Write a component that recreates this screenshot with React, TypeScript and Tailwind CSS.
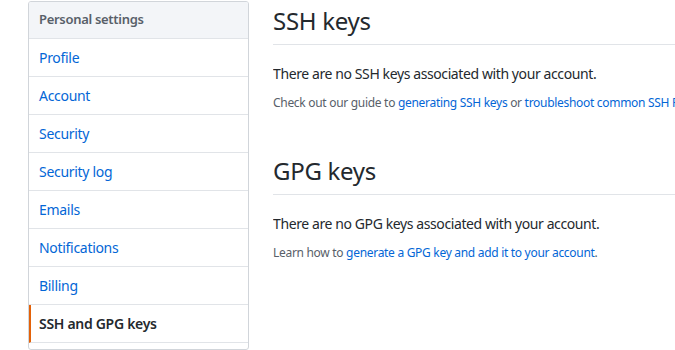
const items = [
  "Profile",
  "Account",
  "Security",
  "Security log",
  "Emails",
  "Notifications",
  "Billing",
];

function Sidebar() {
  return (
    <nav className="w-[221px] shrink-0 mt-[1px] border border-[#d1d5da] rounded-[3px] overflow-hidden bg-white tracking-[-0.3px]">
      <div className="h-[37px] px-[10px] flex items-center bg-[#f3f5f8] text-[13px] font-semibold text-[#586069] border-b border-[#e1e4e8]">
        Personal settings
      </div>
      {items.map((label) => (
        <div
          key={label}
          className="h-[38px] px-[10px] flex items-center text-[14px] text-[#0366d6] border-b border-[#e1e4e8]"
        >
          {label}
        </div>
      ))}
      <div className="h-[38px] pl-[8px] flex items-center text-[14px] font-semibold text-[#24292e] border-l-2 border-[#e36209] border-b border-b-[#e1e4e8]">
        SSH and GPG keys
      </div>
      <div className="h-[38px]" />
    </nav>
  );
}

function Section({
  title,
  empty,
  children,
}: {
  title: string;
  empty: string;
  children: React.ReactNode;
}) {
  return (
    <section className="flex flex-col">
      <h2 className="h-[45px] flex items-center pb-[3px] text-[24px] font-normal tracking-[-0.3px] text-[#24292e] border-b border-[#e1e4e8]">
        {title}
      </h2>
      <p className="mt-[19px] text-[14px] leading-[20px] tracking-[-0.4px] text-[#24292e]">{empty}</p>
      <p className="mt-[10px] text-[12px] leading-[18px] tracking-[-0.3px] text-[#586069] whitespace-nowrap">
        {children}
      </p>
    </section>
  );
}

export default function App() {
  return (
    <div className="w-[675px] h-[350px] overflow-hidden bg-white font-['Noto_Sans',sans-serif] flex gap-[24px] pl-[28px]">
      <Sidebar />
      <main className="flex-1 flex flex-col gap-[38px] min-w-0 overflow-hidden">
        <Section title="SSH keys" empty="There are no SSH keys associated with your account.">
          Check out our guide to <span className="text-[#0366d6]">generating SSH keys</span> or{" "}
          <span className="text-[#0366d6]">troubleshoot common SSH Problems</span>.
        </Section>
        <Section title="GPG keys" empty="There are no GPG keys associated with your account.">
          Learn how to <span className="text-[#0366d6]">generate a GPG key and add it to your account</span>.
        </Section>
      </main>
    </div>
  );
}
